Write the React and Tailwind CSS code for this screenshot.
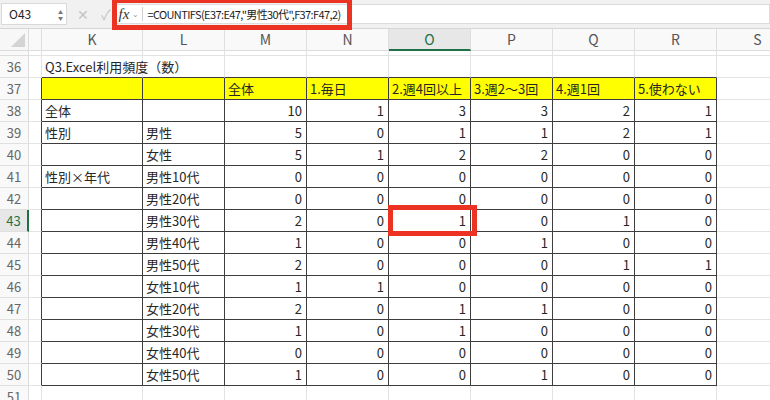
import React from "react";
import clsx from "clsx";

const COLS = ["J", "K", "L", "M", "N", "O", "P", "Q", "R", "S"];
const TABLE = ["K", "L", "M", "N", "O", "P", "Q", "R"];

const head = ["", "", "全体", "1.毎日", "2.週4回以上", "3.週2〜3回", "4.週1回", "5.使わない"];

const data = [
    [38, "全体", "", [10, 1, 3, 3, 2, 1]],
    [39, "性別", "男性", [5, 0, 1, 1, 2, 1]],
    [40, "", "女性", [5, 1, 2, 2, 0, 0]],
    [41, "性別×年代", "男性10代", [0, 0, 0, 0, 0, 0]],
    [42, "", "男性20代", [0, 0, 0, 0, 0, 0]],
    [43, "", "男性30代", [2, 0, 1, 0, 1, 0]],
    [44, "", "男性40代", [1, 0, 0, 1, 0, 0]],
    [45, "", "男性50代", [2, 0, 0, 0, 1, 1]],
    [46, "", "女性10代", [1, 1, 0, 0, 0, 0]],
    [47, "", "女性20代", [2, 0, 1, 1, 0, 0]],
    [48, "", "女性30代", [1, 0, 1, 0, 0, 0]],
    [49, "", "女性40代", [0, 0, 0, 0, 0, 0]],
    [50, "", "女性50代", [1, 0, 0, 1, 0, 0]],
];

// text shown in a cell for a given row / column
const cellText = (row, col) => {
    if (row === 36 && col === "K") return "Q3.Excel利用頻度（数）";
    if (row === 37) {
        const i = TABLE.indexOf(col);
        return i >= 0 ? head[i] : "";
    }
    const r = data.find((d) => d[0] === row);
    if (!r) return "";
    if (col === "K") return r[1];
    if (col === "L") return r[2];
    const i = TABLE.indexOf(col) - 2;
    if (i >= 0) return String(r[3][i]);
    return "";
};

const Cell = ({ row, col }) => {
    const inTable = row >= 37 && row <= 50;
    const rDark = inTable && (TABLE.includes(col) || col === "J");
    const bDark = (inTable || row === 36) && TABLE.includes(col);
    const yellow = row === 37 && TABLE.includes(col);
    const num = row >= 38 && TABLE.indexOf(col) >= 2;
    const text = cellText(row, col);

    return (
        <div
            className={clsx(
                "h-[22px] border-r border-b flex items-center whitespace-nowrap text-[13px] text-[#262626]",
                rDark ? "border-r-[#3d3d3d]" : "border-r-[#e3e3e3]",
                bDark ? "border-b-[#3d3d3d]" : "border-b-[#e3e3e3]",
                yellow && "bg-[#ffff00]",
                num ? "justify-end pr-[4px]" : "pl-[3px]"
            )}
        >
            {text}
        </div>
    );
};

const FormulaBar = () => (
    <div className="h-[29px] bg-[#f1f1f1] border-b border-[#d6d6d6] flex items-center relative">
        <div className="ml-[1px] w-[66px] h-[22px] bg-white border border-[#d9d9d9] flex items-center justify-between pl-[7px] pr-[3px]">
            <span className="text-[12px] text-[#222]">O43</span>
            <span className="flex flex-col items-center gap-[1px] leading-[5px] text-[5px] text-[#777]">
                <span>▲</span>
                <span>▼</span>
            </span>
        </div>
        <span className="ml-[10px] text-[14px] text-[#c4c4c4]">✕</span>
        <span className="ml-[12px] text-[14px] text-[#c4c4c4]">✓</span>
        <div className="ml-[3px] flex-1 h-[20px] bg-white border border-[#dcdcdc] flex items-center">
            <span className="ml-[4px] italic text-[15px] text-[#333]" style={{ fontFamily: "'Liberation Serif', serif" }}>fx</span>
            <span className="ml-[3px] text-[8px] text-[#999]">⌄</span>
            <span className="ml-[3px] h-[14px] w-px bg-[#d0d0d0]"></span>
            <span className="ml-[4px] text-[11px] tracking-[-0.6px] text-[#1d1d1d]">=COUNTIFS(E37:E47,"男性30代",F37:F47,2)</span>
        </div>
    </div>
);

export default function App() {
    const rows = [];
    for (let r = 36; r <= 51; r++) rows.push(r);

    return (
        <div
            className="w-[770px] h-[400px] overflow-hidden relative bg-white"
            style={{ fontFamily: "'Noto Sans CJK JP', 'Noto Sans', sans-serif" }}
        >
            <FormulaBar />
            <div className="grid grid-cols-[29px_13px_101px_82px_82px_82px_82px_82px_82px_82px_82px]">
                {/* column headers */}
                <div className="h-[22px] border-r border-b border-[#dcdcdc] bg-[#f7f7f7] relative">
                    <div className="absolute right-[3px] bottom-[3px] w-0 h-0 border-l-[14px] border-l-transparent border-b-[14px] border-b-[#d4d4d4]"></div>
                </div>
                {COLS.map((c) => (
                    <div
                        key={c}
                        className={clsx(
                            "h-[22px] border-r border-[#dedede] flex items-center justify-center text-[14px]",
                            c === "O"
                                ? "bg-[#e7e7e7] border-b-2 border-b-[#1f7145] text-[#1f7145]"
                                : "bg-[#f9f9f9] border-b border-b-[#dcdcdc] text-[#555]"
                        )}
                    >
                        {c === "J" ? "" : c}
                    </div>
                ))}

                {/* partly hidden row 35 */}
                <div className="h-[5px] border-r border-b border-[#dcdcdc] bg-[#f9f9f9]"></div>
                {COLS.map((c) => (
                    <div key={c} className="h-[5px] border-r border-b border-[#e3e3e3]"></div>
                ))}

                {rows.map((r) => (
                    <React.Fragment key={r}>
                        <div
                            className={clsx(
                                "h-[22px] border-b border-b-[#e0e0e0] flex items-center justify-center text-[13px]",
                                r === 43
                                    ? "bg-[#e7e7e7] border-r-2 border-r-[#1f7145] text-[#1f7145]"
                                    : "bg-[#f9f9f9] border-r border-r-[#dcdcdc] text-[#666]"
                            )}
                        >
                            {r}
                        </div>
                        {COLS.map((c) => (
                            <Cell key={c} row={r} col={c} />
                        ))}
                    </React.Fragment>
                ))}
            </div>

            {/* red highlight boxes */}
            <div className="absolute left-[112px] top-[-2px] w-[240px] h-[32px] border-[5px] border-[#ec3323]"></div>
            <div className="absolute left-[388px] top-[205px] w-[89px] h-[31px] border-[5px] border-[#ec3323]"></div>
        </div>
    );
}
